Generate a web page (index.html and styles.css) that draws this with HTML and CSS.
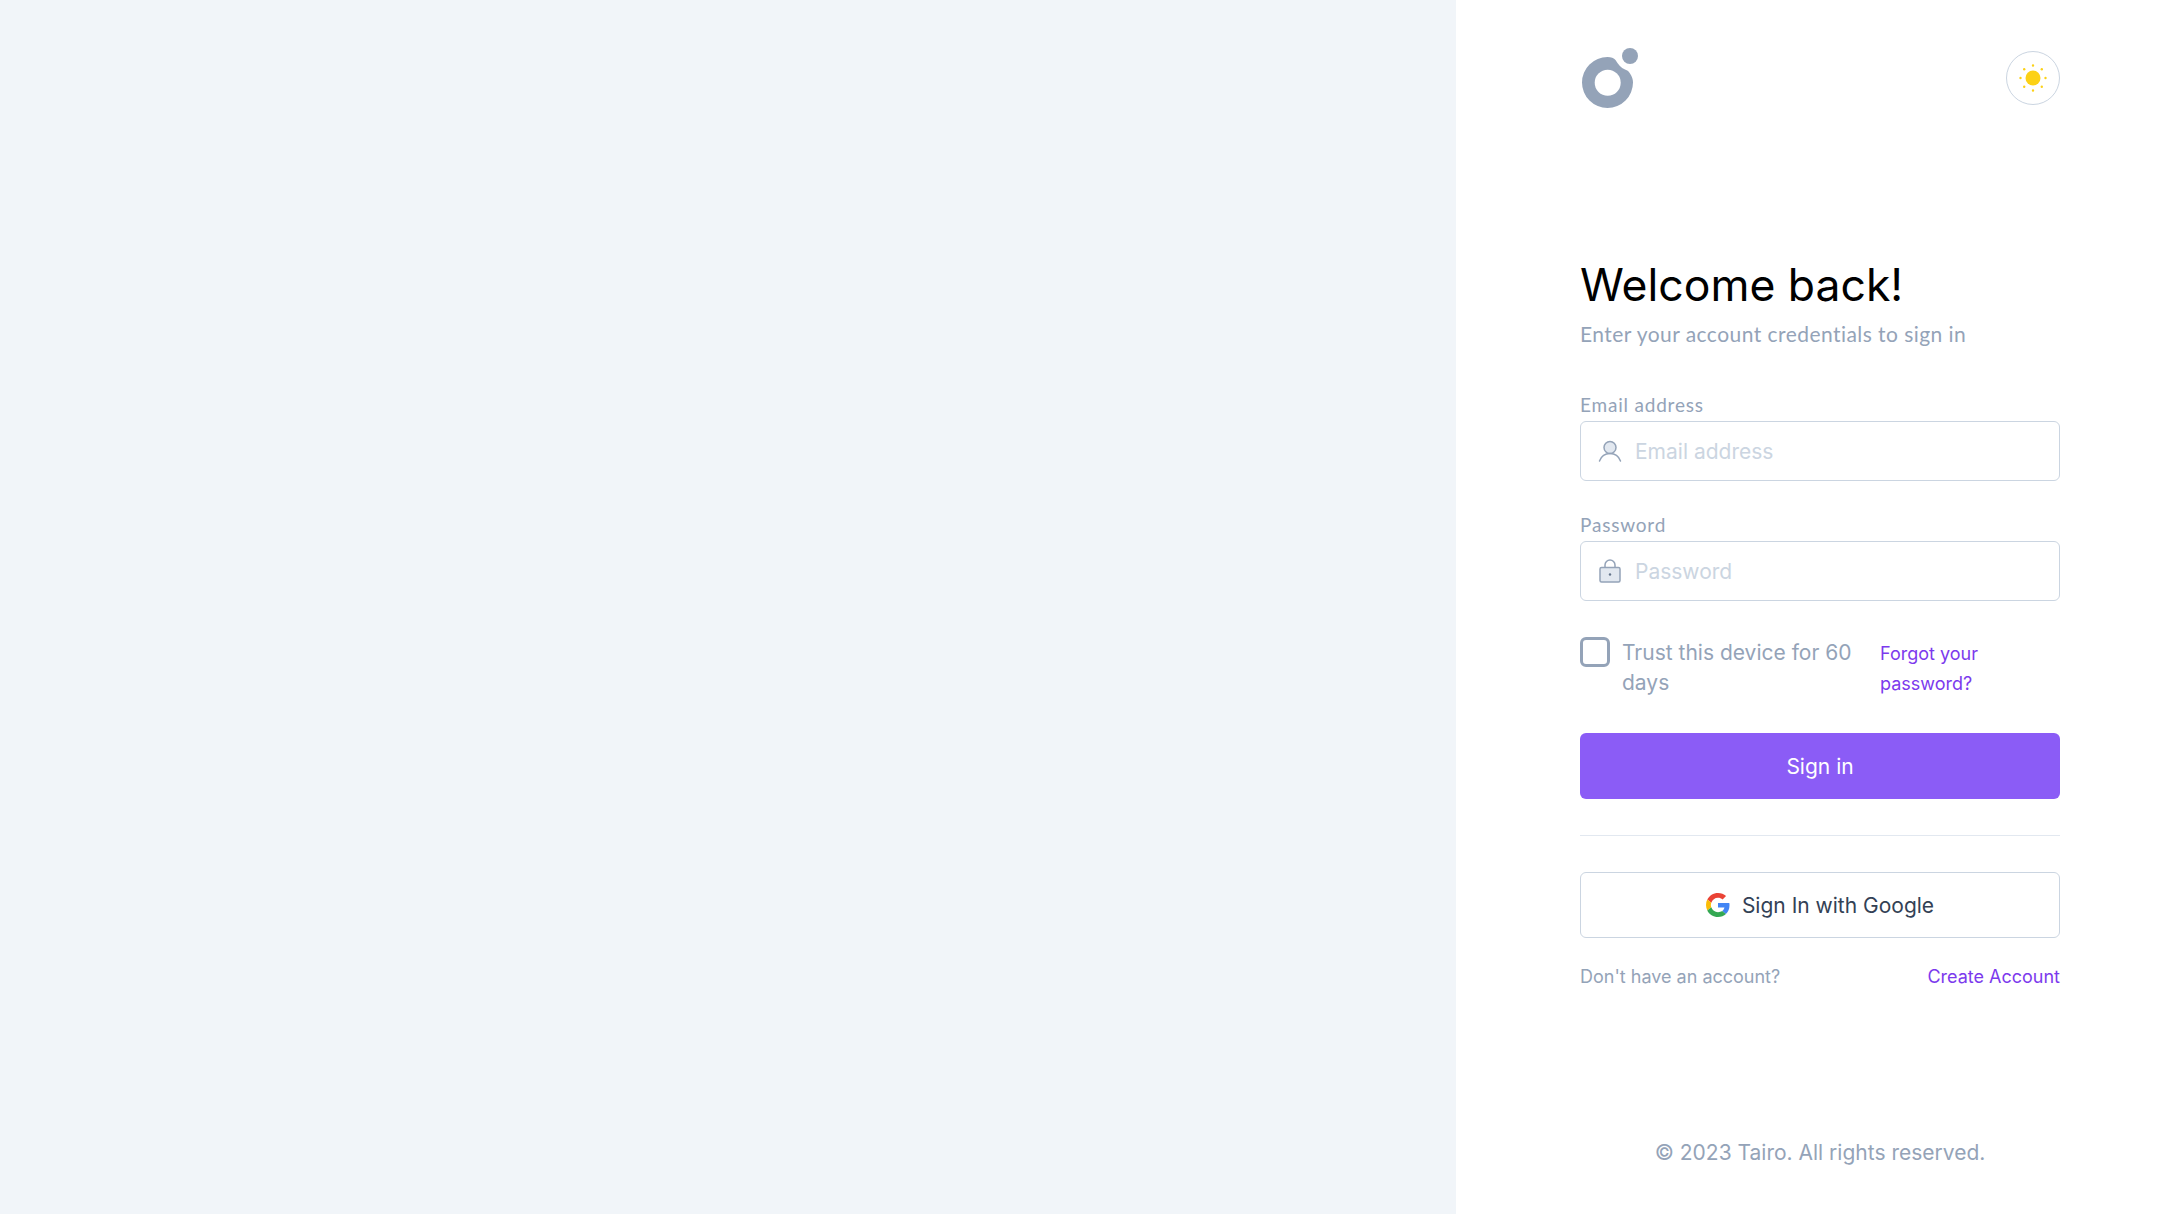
FILE: index.html
```html
<!DOCTYPE html>
<html lang="en">
<head>
  <meta charset="UTF-8" />
  <title>Login - Tairo</title>
  <link rel="stylesheet" href="styles.css">
</head>
<body>
  <div class="page">
    <div class="side"></div>
    <main class="panel">
      <header class="top">
        <svg class="logo" viewBox="0 0 56 60" width="56" height="60">
          <path fill="#94a3b8" d="M25.500 9C29 9 32 10 33.500 12 36 16 39 20 43 21.500 45.500 22.300 47 23.500 48 25.500 50 28.500 51 31.500 51 34.500A25.500 25.500 0 1 1 25.500 9z"/>
          <circle cx="25.700" cy="34.700" r="13" fill="#fff"/>
          <circle cx="48" cy="8" r="8" fill="#94a3b8"/>
        </svg>
        <button class="theme" type="button" aria-label="Toggle theme">
          <svg viewBox="0 0 28 28" width="28" height="28" fill="#fcd116">
            <circle cx="14" cy="14" r="7.500"/>
            <circle cx="14" cy="1.500" r="1.200"/>
            <circle cx="14" cy="26.500" r="1.200"/>
            <circle cx="1.500" cy="14" r="1.200"/>
            <circle cx="26.500" cy="14" r="1.200"/>
            <circle cx="5.200" cy="5.200" r="1.200"/>
            <circle cx="22.800" cy="5.200" r="1.200"/>
            <circle cx="5.200" cy="22.800" r="1.200"/>
            <circle cx="22.800" cy="22.800" r="1.200"/>
          </svg>
        </button>
      </header>

      <section class="content">
        <h1>Welcome back!</h1>
        <p class="subtitle">Enter your account credentials to sign in</p>

        <form class="login-form">
          <div class="field">
            <label for="email">Email address</label>
            <div class="input-wrap">
              <svg class="input-icon" viewBox="0 0 24 24" width="24" height="24">
                <circle cx="12" cy="8.500" r="6" fill="#e2e8f0" stroke="#94a3b8" stroke-width="1.500"/>
                <path d="M1.500 22c1.500-4 5-7.500 10.500-7.500S21 18 22.500 22" fill="none" stroke="#94a3b8" stroke-width="1.500" stroke-linecap="round"/>
              </svg>
              <input id="email" type="text" placeholder="Email address">
            </div>
          </div>
          <div class="field">
            <label for="password">Password</label>
            <div class="input-wrap">
              <svg class="input-icon" viewBox="0 0 24 24" width="24" height="24">
                <rect x="2" y="8.500" width="20" height="14.500" rx="1.500" fill="#e2e8f0" stroke="#94a3b8" stroke-width="1.500"/>
                <path d="M7 8.500V6a5 5 0 0 1 10 0v2.500" fill="none" stroke="#94a3b8" stroke-width="1.500"/>
                <circle cx="12" cy="15.500" r="1.200" fill="#64748b"/>
              </svg>
              <input id="password" type="password" placeholder="Password">
            </div>
          </div>

          <div class="options">
            <label class="trust">
              <span class="box"></span>
              <span class="trust-text">Trust this device for 60 days</span>
            </label>
            <a class="link forgot" href="#">Forgot your password?</a>
          </div>

          <button class="btn btn-primary" type="button">Sign in</button>
          <hr class="divider">
          <button class="btn btn-google" type="button">
            <svg viewBox="0 0 48 48" width="24" height="24">
              <path fill="#ea4335" d="M24 9.500c3.500 0 6.700 1.200 9.200 3.600l6.900-6.900C35.900 2.400 30.400 0 24 0 14.600 0 6.500 5.400 2.600 13.200l8 6.200C12.500 13.700 17.800 9.500 24 9.500z"/>
              <path fill="#4285f4" d="M47 24.500c0-1.600-.1-3.100-.4-4.500H24v9h12.900c-.6 3-2.200 5.500-4.800 7.200l7.700 6C44.300 38 47 31.900 47 24.500z"/>
              <path fill="#fbbc05" d="M10.500 28.600c-.5-1.400-.8-3-.8-4.600s.3-3.200.8-4.600l-8-6.200C.9 16.500 0 20.100 0 24s.9 7.500 2.600 10.800l7.900-6.200z"/>
              <path fill="#34a853" d="M24 48c6.500 0 11.900-2.100 15.900-5.800l-7.700-6c-2.200 1.400-4.900 2.300-8.200 2.300-6.200 0-11.500-4.200-13.400-9.900l-8 6.200C6.500 42.600 14.600 48 24 48z"/>
            </svg>
            <span>Sign In with Google</span>
          </button>
          <div class="signup">
            <span>Don't have an account?</span>
            <a class="link" href="#">Create Account</a>
          </div>
        </form>
      </section>

      <footer class="copy">© 2023 Tairo. All rights reserved.</footer>
    </main>
  </div>
</body>
</html>
```

FILE: styles.css
```css
* {
  box-sizing: border-box;
}
html, body {
  margin: 0;
  height: 100%;
}
body {
  font-family: Inter, sans-serif;
  color: #94a3b8;
  background-color: #fff;
}
.page {
  display: flex;
  height: 1214px;
}
.side {
  flex: 1;
  background-color: #f1f5f9;
}
.panel {
  flex: none;
  width: 728px;
  display: flex;
  flex-direction: column;
  padding: 48px 124px 0;
}
.top {
  display: flex;
  justify-content: space-between;
  align-items: center;
  height: 60px;
}
.logo {
  display: block;
  margin-left: 2px;
}
.theme {
  width: 54px;
  height: 54px;
  display: flex;
  align-items: center;
  justify-content: center;
  padding: 0;
  background: #fff;
  border: 1px solid #cbd5e1;
  border-radius: 50%;
}
.content {
  padding-top: 147px;
}
h1 {
  margin: 0;
  font-family: Inter, sans-serif;
  font-size: 44.5px;
  font-weight: 400;
  line-height: 60px;
  color: #000;
}
.subtitle {
  margin: 4px 0 0;
  font-family: Lato, sans-serif;
  font-size: 21px;
  letter-spacing: 0.45px;
  line-height: 29px;
}
.login-form {
  margin-top: 45px;
}
.field {
  margin-bottom: 32px;
}
.field label {
  display: block;
  font-family: Lato, sans-serif;
  font-size: 19px;
  letter-spacing: 0.8px;
  line-height: 24px;
  margin-bottom: 4px;
}
.input-wrap {
  position: relative;
}
.input-wrap input {
  display: block;
  width: 100%;
  height: 60px;
  padding: 1px 16px 0 54px;
  font-family: Inter, sans-serif;
  font-size: 21px;
  color: #334155;
  background: #fff;
  border: 1px solid #cbd5e1;
  border-radius: 6px;
  outline: none;
}
.input-wrap input::placeholder {
  color: #cbd5e1;
}
.input-icon {
  position: absolute;
  left: 18px;
  top: 18px;
}
.options {
  display: flex;
  align-items: flex-start;
  margin-top: 36px;
}
.trust {
  display: flex;
  gap: 12px;
  width: 300px;
  font-size: 21px;
  line-height: 30px;
}
.trust-text {
  padding-top: 1px;
}
.box {
  flex: none;
  width: 30px;
  height: 30px;
  border: 3px solid #94a3b8;
  border-radius: 6px;
}
.link {
  color: #7c3aed;
  text-decoration: none;
}
.forgot {
  width: 130px;
  font-size: 18px;
  line-height: 30px;
  margin-top: 2px;
}
.btn {
  display: flex;
  align-items: center;
  justify-content: center;
  width: 100%;
  height: 66px;
  font-family: Inter, sans-serif;
  font-size: 21px;
  border-radius: 6px;
}
.btn-primary {
  margin-top: 34px;
  color: #fff;
  background-color: #8b5cf6;
  border: 0;
}
.divider {
  margin: 36px 0;
  border: 0;
  border-top: 1px solid #e2e8f0;
}
.btn-google {
  gap: 12px;
  color: #334155;
  background-color: #fff;
  border: 1px solid #cbd5e1;
}
.signup {
  display: flex;
  justify-content: space-between;
  margin-top: 26px;
  font-size: 18px;
  line-height: 26px;
}
.copy {
  margin-top: auto;
  margin-bottom: 47px;
  text-align: center;
  font-size: 21px;
  line-height: 28px;
}
```
